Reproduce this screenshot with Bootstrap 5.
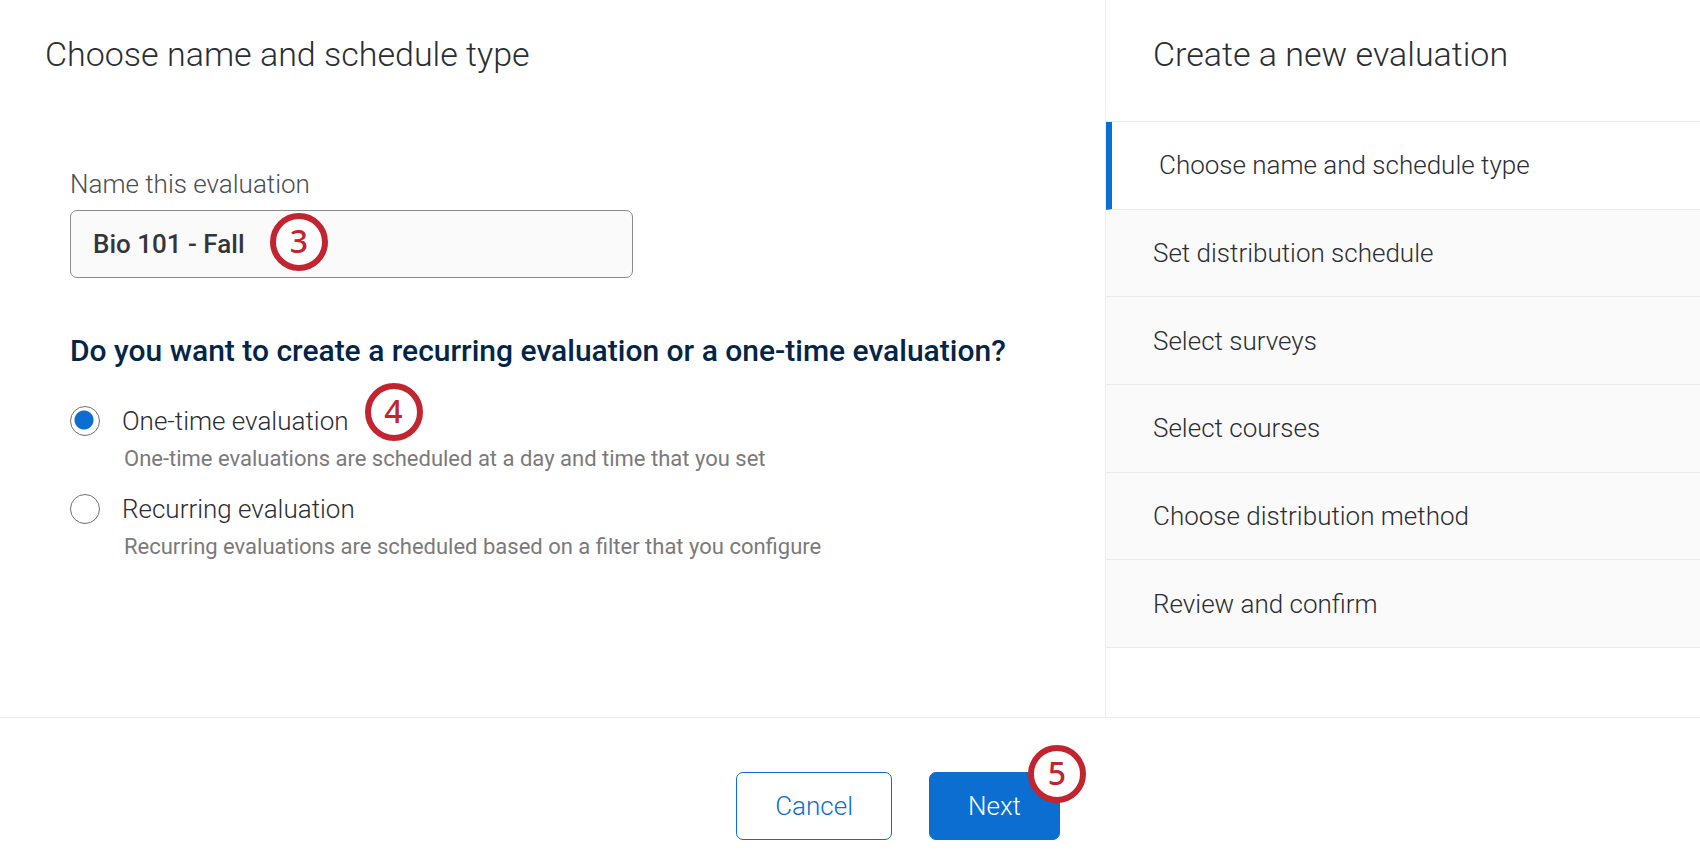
<!DOCTYPE html>
<html lang="en">
<head>
<meta charset="utf-8">
<meta name="viewport" content="width=device-width, initial-scale=1">
<title>Create a new evaluation</title>
<link rel="stylesheet" href="https://cdn.jsdelivr.net/npm/bootstrap@5.3.0/dist/css/bootstrap.min.css">
<script src="https://cdn.jsdelivr.net/npm/bootstrap@5.3.0/dist/js/bootstrap.bundle.min.js"></script>
<style>
  :root { --brand: #0b6ed0; --ink: #2a2e32; --line: #ebebeb; --callout: #c32530; }
  body { font-family: Roboto, "Liberation Sans", sans-serif; font-size: 26px; line-height: 32px; font-weight: 350; color: var(--ink); }
  .main-pane { width: 65%; }
  .steps-pane { width: 35%; border-left: 1px solid #ededed; }
  .pane-title { font-size: 34px; line-height: 40px; font-weight: 350; padding: 34px 45px 0; margin: 0; }
  .steps-pane .pane-title { padding: 34px 47px 47px; border-bottom: 1px solid var(--line); }

  .eval-form { padding: 94px 70px 40px; }
  .eval-form .form-label { color: #4a4d51; margin-bottom: 10px; }
  .name-field { max-width: 563px; margin-bottom: 53px; }
  .name-field .form-control { height: 68px; padding: 0 22px; font-size: 26px; font-weight: 500; color: #32363a;
    background: #fafafa; border: 1px solid #8b8b8b; border-radius: 7px; }
  .question { font-size: 30px; line-height: 40px; font-weight: 500; color: #032548; margin-bottom: 34px; }

  .choice { gap: 22px; margin-bottom: 20px; }
  .choice .form-check-input { width: 30px; height: 30px; margin: 1px 0 0; border: 1px solid #6f6f6f; background-color: #fff; }
  .choice .form-check-input:checked { background-image: radial-gradient(circle at 13px 13px, var(--brand) 9px, transparent 10px); }
  .choice-help { font-size: 22px; line-height: 28px; font-weight: 400; color: #7a7a7a; padding: 8px 0 0 2px; }

  .step-list { min-height: 526px; }
  .step-list li { border-bottom: 1px solid var(--line); background: #fafafa; }
  .step-list a { color: var(--ink); padding: 0 47px; }
  .step-list li.current { background: #fff; border-left: 6px solid var(--brand); }

  .action-bar { border-top: 1px solid var(--line); }
  .action-group { width: 65%; gap: 37px; padding: 54px 45px 24px; }
  .action-group .btn { height: 68px; padding: 0 38px; font-size: 26px; line-height: 32px; font-weight: 350; border-radius: 7px; border-color: var(--brand); }
  .btn-cancel { color: var(--brand); background: #fff; }
  .btn-next { color: #fff; background: var(--brand); }

  .callout { position: absolute; width: 58px; height: 58px; border: 6px solid var(--callout); border-radius: 50%;
    background: #fff; color: var(--callout); font: 500 32px/44px "Noto Sans", sans-serif; text-align: center; }
  .callout-field { left: 200px; top: 3px; }
  .callout-choice { left: calc(100% + 16px); top: -22px; }
  .callout-next { right: -26px; top: -27px; }
</style>
</head>
<body class="min-vh-100 d-flex flex-column bg-white">
  <div class="d-flex flex-fill">
    <main class="main-pane">
      <h1 class="pane-title">Choose name and schedule type</h1>
      <form class="eval-form" id="evaluation">
        <div class="name-field">
          <label class="form-label d-block" for="evalName">Name this evaluation</label>
          <div class="position-relative">
            <input class="form-control" type="text" id="evalName" value="Bio 101 - Fall">
            <span class="callout callout-field">3</span>
          </div>
        </div>
        <h2 class="question">Do you want to create a recurring evaluation or a one-time evaluation?</h2>
        <div class="choice d-flex">
          <input class="form-check-input flex-shrink-0" type="radio" name="schedule" id="oneTime" aria-describedby="oneTimeHelp" checked>
          <div>
            <label class="position-relative" for="oneTime">One-time evaluation<span class="callout callout-choice">4</span></label>
            <div class="choice-help" id="oneTimeHelp">One-time evaluations are scheduled at a day and time that you set</div>
          </div>
        </div>
        <div class="choice d-flex">
          <input class="form-check-input flex-shrink-0" type="radio" name="schedule" id="recurring" aria-describedby="recurringHelp">
          <div>
            <label for="recurring">Recurring evaluation</label>
            <div class="choice-help" id="recurringHelp">Recurring evaluations are scheduled based on a filter that you configure</div>
          </div>
        </div>
      </form>
    </main>
    <aside class="steps-pane">
      <h2 class="pane-title">Create a new evaluation</h2>
      <ol class="step-list list-unstyled d-flex flex-column mb-0">
        <li class="current d-flex flex-fill"><a class="d-flex flex-fill align-items-center text-decoration-none" href="#" aria-current="step">Choose name and schedule type</a></li>
        <li class="d-flex flex-fill"><a class="d-flex flex-fill align-items-center text-decoration-none" href="#">Set distribution schedule</a></li>
        <li class="d-flex flex-fill"><a class="d-flex flex-fill align-items-center text-decoration-none" href="#">Select surveys</a></li>
        <li class="d-flex flex-fill"><a class="d-flex flex-fill align-items-center text-decoration-none" href="#">Select courses</a></li>
        <li class="d-flex flex-fill"><a class="d-flex flex-fill align-items-center text-decoration-none" href="#">Choose distribution method</a></li>
        <li class="d-flex flex-fill"><a class="d-flex flex-fill align-items-center text-decoration-none" href="#">Review and confirm</a></li>
      </ol>
    </aside>
  </div>
  <footer class="action-bar">
    <div class="action-group d-flex justify-content-end">
      <button class="btn btn-cancel" type="button">Cancel</button>
      <div class="position-relative">
        <button class="btn btn-next" type="submit" form="evaluation">Next</button>
        <span class="callout callout-next">5</span>
      </div>
    </div>
  </footer>
</body>
</html>
